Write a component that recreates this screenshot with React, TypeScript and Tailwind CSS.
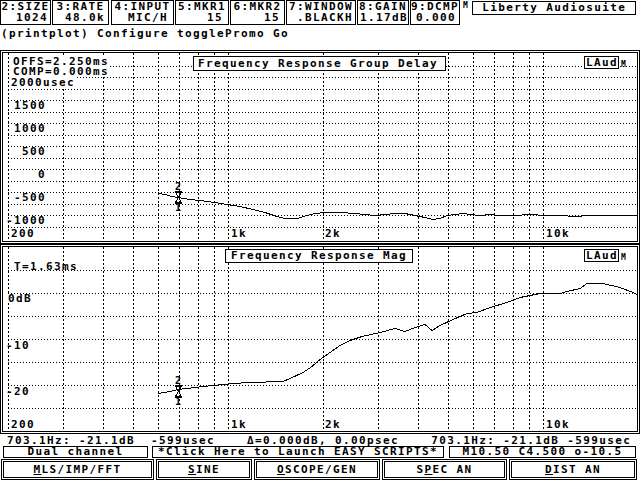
import React from 'react';

const F = "font-['DejaVu_Sans_Mono',monospace] font-bold text-[11px] tracking-[1.38px]";

const xf = (f: number) => 8 + 315 * Math.log10(f / 200);
const vFreqs = [200, 300, 400, 500, 600, 700, 800, 900, 1000, 2000, 3000, 4000, 5000, 6000, 7000, 8000, 9000, 10000];

function Grid({ y0, y1, hs }: { y0: number; y1: number; hs: number[] }) {
  return (
    <g shapeRendering="crispEdges" stroke="#000" strokeWidth={1}>
      {hs.map((y) => (
        <line key={'h' + y} x1={8} x2={637} y1={y + 0.5} y2={y + 0.5} strokeDasharray="1 2" />
      ))}
      {vFreqs.map((f) => {
        const x = Math.round(xf(f)) + 0.5;
        return <line key={'v' + f} x1={x} x2={x} y1={y0} y2={y1} strokeDasharray="2 2" />;
      })}
    </g>
  );
}

function L({ x, t, s }: { x: number; t: number; s: string }) {
  return (
    <text x={x} y={t + 8} className={F} fill="#000">
      {s}
    </text>
  );
}

function Marker({ x, y }: { x: number; y: number }) {
  return (
    <g shapeRendering="crispEdges" stroke="#000" fill="none">
      <text x={x - 3} y={y + 7} stroke="none" fill="#000" className="font-['DejaVu_Sans_Mono',monospace] font-bold text-[10px]">
        2
      </text>
      <line x1={x - 3} x2={x + 4} y1={y + 8.5} y2={y + 8.5} />
      <polygon points={`${x - 2.5},${y + 9.5} ${x + 3.5},${y + 9.5} ${x + 0.5},${y + 14.5}`} />
      <polygon points={`${x + 0.5},${y + 14.5} ${x - 2.5},${y + 19.5} ${x + 3.5},${y + 19.5}`} />
      <line x1={x - 3} x2={x + 4} y1={y + 20.5} y2={y + 20.5} />
      <text x={x - 3} y={y + 28} stroke="none" fill="#000" className="font-['DejaVu_Sans_Mono',monospace] font-bold text-[10px]">
        1
      </text>
    </g>
  );
}

const topCurve: [number, number][] = [
  [158, 193], [165, 194], [172, 196], [178, 197], [190, 199], [200, 200], [215, 202], [227, 204], [240, 206],
  [253, 209], [265, 212], [277, 216], [285, 218], [297, 218], [307, 215], [315, 213], [325, 212], [340, 212],
  [355, 213], [365, 214], [375, 215], [385, 214], [395, 213], [405, 213], [415, 215], [425, 217], [433, 219],
  [440, 218], [447, 215], [455, 214], [463, 213], [470, 214], [480, 215], [490, 214], [500, 215], [515, 215],
  [530, 214], [545, 215], [560, 215], [575, 216], [590, 215], [605, 215], [620, 215], [637, 215],
];

const botCurve: [number, number][] = [
  [158, 393], [170, 391], [178, 389], [195, 387], [213, 385], [233, 383], [250, 382], [283, 381], [290, 378],
  [303, 372], [312, 366], [320, 359], [330, 352], [340, 345], [350, 340], [362, 336], [380, 332], [395, 328],
  [405, 331], [415, 327], [425, 324], [432, 330], [440, 325], [453, 319], [467, 313], [477, 312], [490, 307],
  [507, 302], [520, 297], [540, 293], [560, 293], [567, 291], [580, 288], [587, 283], [603, 283], [620, 287],
  [633, 292], [637, 294],
];

const pts = (a: [number, number][]) => a.map(([x, y]) => `${x},${y + 0.5}`).join(' ');

function Frame({ h, children }: { h: string; children: React.ReactNode }) {
  return (
    <div className={`border border-black p-px ${h}`}>
      <div className="border border-black h-full relative overflow-hidden">{children}</div>
    </div>
  );
}

function LAud() {
  return (
    <div className="flex items-end">
      <div className={`${F} border border-black leading-[11px] h-[13px] pl-px bg-white`}>LAud</div>
      <span className="font-['DejaVu_Sans_Mono',monospace] font-bold text-[8px] leading-[8px] ml-[2px]">M</span>
    </div>
  );
}

const boxes = [
  { w: 'w-[51px]', l: '2:SIZE', v: '1024', pr: 'pr-[2px]', ml: '' },
  { w: 'w-[57px]', l: '3:RATE', v: '48.0k', pr: 'pr-[3px]', ml: 'ml-[1px]' },
  { w: 'w-[63px]', l: '4:INPUT', v: 'MIC/H', pr: 'pr-[5px]', ml: 'ml-[2px]' },
  { w: 'w-[54px]', l: '5:MKR1', v: '15', pr: 'pr-[5px]', ml: 'ml-[1px]' },
  { w: 'w-[55px]', l: '6:MKR2', v: '15', pr: 'pr-[4px]', ml: 'ml-[1px]' },
  { w: 'w-[70px]', l: '7:WINDOW', v: '.BLACKH', pr: 'pr-[2px]', ml: 'ml-[1px]' },
  { w: 'w-[52px]', l: '8:GAIN', v: '1.17dB', pr: 'pr-0', ml: 'ml-[1px]' },
  { w: 'w-[50px]', l: '9:DCMP', v: '0.000', pr: 'pr-[3px]', ml: 'ml-[1px]' },
];

function Btn({ w, ml, pre, u, post }: { w: string; ml: string; pre: string; u: string; post: string }) {
  return (
    <div className={`${w} ${ml} h-[21px] border border-black p-px`}>
      <div className={`h-full border border-black flex items-center justify-center ${F} leading-[11px] whitespace-pre`}>
        {pre}
        <u className="underline underline-offset-[1px]">{u}</u>
        {post}
      </div>
    </div>
  );
}

export default function App() {
  return (
    <div className={`w-[640px] h-[480px] bg-white text-black overflow-hidden ${F}`}>
      {/* top parameter boxes */}
      <div className="flex h-[25px] items-start">
        {boxes.map((b) => (
          <div key={b.l} className={`${b.w} ${b.ml} h-[25px] border border-black leading-[11px] flex flex-col`}>
            <div className="text-center whitespace-pre">{b.l}</div>
            <div className={`text-right whitespace-pre ${b.pr}`}>{b.v}</div>
          </div>
        ))}
        <span className="font-['DejaVu_Sans_Mono',monospace] font-bold text-[8px] leading-[8px] ml-[3px] mt-[2px]">M</span>
        <div className="ml-[3px] mt-px w-[164px] h-[14px] border border-black leading-[12px] text-center whitespace-pre">
          Liberty Audiosuite
        </div>
      </div>

      <div className="h-[25px] pt-[3px] pl-[1px] leading-[11px] whitespace-pre">(printplot) Configure togglePromo Go</div>

      {/* Group delay chart */}
      <Frame h="h-[194px]">
        <svg width={634} height={188} viewBox="3 53 634 188" className="block">
          <Grid y0={53} y1={241} hs={[66, 77, 89, 100, 112, 123, 135, 146, 158, 169, 181, 192, 204, 215, 227]} />
          <rect x={10} y={55} width={98} height={21} fill="#fff" />
          <rect x={10} y={77} width={66} height={10} fill="#fff" />
          <L x={13} t={57} s="OFFS=2.250ms" />
          <L x={13} t={67} s="COMP=0.000ms" />
          <L x={11} t={78} s="2000usec" />
          <L x={14} t={101} s="1500" />
          <L x={14} t={124} s="1000" />
          <L x={22} t={147} s="500" />
          <L x={38} t={170} s="0" />
          <L x={14} t={193} s="-500" />
          <L x={6} t={216} s="-1000" />
          <L x={11} t={229} s="200" />
          <L x={231} t={229} s="1k" />
          <L x={325} t={229} s="2k" />
          <L x={546} t={229} s="10k" />
          <polyline points={pts(topCurve)} fill="none" stroke="#000" strokeWidth={1} shapeRendering="crispEdges" />
          <Marker x={178} y={183} />
        </svg>
        <div className="absolute left-[190px] top-[3px] w-[253px] h-[15px] bg-white border border-black pl-[4px] leading-[13px] whitespace-pre">
          Frequency Response Group Delay
        </div>
        <div className="absolute left-[581px] top-[3px]">
          <LAud />
        </div>
      </Frame>

      {/* Magnitude chart */}
      <Frame h="h-[190px]">
        <svg width={634} height={184} viewBox="3 247 634 184" className="block">
          <Grid y0={247} y1={431} hs={[270, 293, 316, 339, 362, 385, 408]} />
          <L x={14} t={262} s="T=1.63ms" />
          <rect x={7} y={294} width={26} height={9} fill="#fff" />
          <L x={8} t={294} s="0dB" />
          <L x={6} t={341} s="-10" />
          <L x={6} t={387} s="-20" />
          <L x={11} t={420} s="200" />
          <L x={231} t={420} s="1k" />
          <L x={325} t={420} s="2k" />
          <L x={546} t={420} s="10k" />
          <polyline points={pts(botCurve)} fill="none" stroke="#000" strokeWidth={1} shapeRendering="crispEdges" />
          <Marker x={178} y={377} />
        </svg>
        <div className="absolute left-[222px] top-[2px] w-[188px] h-[14px] bg-white border border-black pl-[5px] leading-[12px] whitespace-pre">
          Frequency Response Mag
        </div>
        <div className="absolute left-[581px] top-[2px]">
          <LAud />
        </div>
      </Frame>

      {/* status line */}
      <div className="h-[12px] pt-[1px] pl-[7px] leading-[11px] whitespace-pre">
        {'703.1Hz: -21.1dB  -599usec    \u0394=0.000dB, 0.00psec    703.1Hz: -21.1dB -599usec'}
      </div>

      <div className="flex h-[12px]">
        <div className="ml-[3px] w-[145px] h-[12px] border border-black leading-[10px] text-center whitespace-pre">Dual channel</div>
        <div className="ml-[4px] w-[292px] h-[12px] border border-black leading-[10px] text-center whitespace-pre">
          *Click Here to Launch EASY SCRIPTS*
        </div>
        <div className="ml-[5px] w-[187px] h-[12px] border border-black leading-[10px] text-center whitespace-pre">
          M10.50 C4.500 o-10.5
        </div>
      </div>

      <div className="flex mt-px">
        <Btn w="w-[153px]" ml="ml-px" pre="" u="M" post="LS/IMP/FFT" />
        <Btn w="w-[96px]" ml="ml-[2px]" pre="" u="S" post="INE" />
        <Btn w="w-[126px]" ml="ml-[2px]" pre="" u="O" post="SCOPE/GEN" />
        <Btn w="w-[125px]" ml="ml-[2px]" pre="S" u="P" post="EC AN" />
        <Btn w="w-[128px]" ml="ml-[2px]" pre="" u="D" post="IST AN" />
      </div>
    </div>
  );
}
